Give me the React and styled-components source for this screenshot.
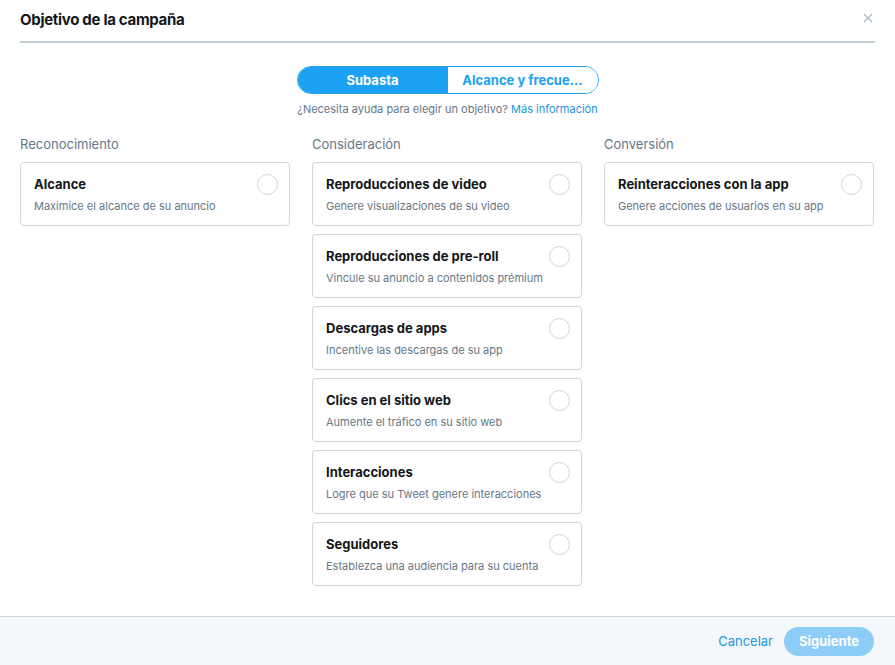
import styled, { createGlobalStyle } from 'styled-components'

const groups = [
  {
    title: 'Reconocimiento',
    items: [{ name: 'Alcance', desc: 'Maximice el alcance de su anuncio' }],
  },
  {
    title: 'Consideración',
    items: [
      { name: 'Reproducciones de video', desc: 'Genere visualizaciones de su video' },
      { name: 'Reproducciones de pre-roll', desc: 'Vincule su anuncio a contenidos prémium' },
      { name: 'Descargas de apps', desc: 'Incentive las descargas de su app' },
      { name: 'Clics en el sitio web', desc: 'Aumente el tráfico en su sitio web' },
      { name: 'Interacciones', desc: 'Logre que su Tweet genere interacciones' },
      { name: 'Seguidores', desc: 'Establezca una audiencia para su cuenta' },
    ],
  },
  {
    title: 'Conversión',
    items: [{ name: 'Reinteracciones con la app', desc: 'Genere acciones de usuarios en su app' }],
  },
]

export default function App() {
  return (
    <>
      <GlobalStyle />
      <Modal>
        <Header>
          <Title>Objetivo de la campaña</Title>
          <Close aria-label="Cerrar">
            <svg width="10" height="10" viewBox="0 0 10 10">
              <path d="M1 1L9 9M9 1L1 9" stroke="#aab8c2" strokeWidth="1.3" fill="none" />
            </svg>
          </Close>
        </Header>

        <Body>
          <Toggle>
            <ToggleButton $active>Subasta</ToggleButton>
            <ToggleButton>Alcance y frecue...</ToggleButton>
          </Toggle>
          <Help>
            ¿Necesita ayuda para elegir un objetivo? <Link href="#">Más información</Link>
          </Help>

          <Columns>
            {groups.map((g) => (
              <Column key={g.title}>
                <ColumnTitle>{g.title}</ColumnTitle>
                {g.items.map((it) => (
                  <Card key={it.name}>
                    <CardText>
                      <CardName>{it.name}</CardName>
                      <CardDesc>{it.desc}</CardDesc>
                    </CardText>
                    <Radio />
                  </Card>
                ))}
              </Column>
            ))}
          </Columns>
        </Body>

        <Footer>
          <CancelLink href="#">Cancelar</CancelLink>
          <PrimaryButton disabled>Siguiente</PrimaryButton>
        </Footer>
      </Modal>
    </>
  )
}

const GlobalStyle = createGlobalStyle`
  html, body {
    margin: 0;
    padding: 0;
    background: #fff;
  }
  body {
    font-family: Inter, Roboto, "Liberation Sans", Arial, sans-serif;
    color: #14171a;
    -webkit-font-smoothing: antialiased;
  }
`

const Modal = styled.div`
  width: 895px;
  height: 665px;
  display: flex;
  flex-direction: column;
  background: #fff;
`

const Header = styled.div`
  margin: 0 20px;
  display: flex;
  align-items: center;
  justify-content: space-between;
  border-bottom: 2px solid #c4cfd6;
  box-sizing: border-box;
  height: 43px;
`

const Title = styled.h1`
  margin: 0;
  font-size: 15px;
  font-weight: 700;
  letter-spacing: -0.3px;
  color: #14171a;
  padding-bottom: 2px;
`

const Close = styled.button`
  border: 0;
  background: none;
  padding: 0;
  margin-right: 2px;
  margin-bottom: 5px;
  display: flex;
  cursor: pointer;
`

const Body = styled.div`
  flex: 1;
  padding: 23px 20px 0;
  display: flex;
  flex-direction: column;
  align-items: center;
`

const Toggle = styled.div`
  display: flex;
  width: 302px;
  height: 28px;
  border: 1px solid #1da1f2;
  border-radius: 14px;
  overflow: hidden;
  box-sizing: border-box;
`

const ToggleButton = styled.button`
  flex: 1;
  border: 0;
  margin: 0;
  padding: 0;
  font-family: inherit;
  font-size: 13px;
  font-weight: 700;
  cursor: pointer;
  background: ${(p) => (p.$active ? '#1da1f2' : '#fff')};
  color: ${(p) => (p.$active ? '#fff' : '#1da1f2')};
`

const Help = styled.p`
  margin: 8px 0 0;
  font-size: 11px;
  color: #657786;
`

const Link = styled.a`
  color: #1b95e0;
  text-decoration: none;
`

const Columns = styled.div`
  align-self: stretch;
  margin-top: 20px;
  display: grid;
  grid-template-columns: repeat(3, 270px);
  column-gap: 22px;
  align-items: start;
`

const Column = styled.div`
  display: flex;
  flex-direction: column;
  gap: 8px;
`

const ColumnTitle = styled.div`
  font-size: 13px;
  color: #657786;
  margin-bottom: 2px;
  line-height: 16px;
`

const Card = styled.div`
  height: 64px;
  box-sizing: border-box;
  border: 1px solid #ccd6dd;
  border-radius: 4px;
  padding: 11px 11px 0 13px;
  display: flex;
  justify-content: space-between;
  align-items: flex-start;
`

const CardText = styled.div`
  display: flex;
  flex-direction: column;
  padding-top: 2px;
`

const CardName = styled.div`
  font-size: 13px;
  font-weight: 700;
  color: #14171a;
  line-height: 16px;
`

const CardDesc = styled.div`
  margin-top: 7px;
  font-size: 11px;
  color: #657786;
  line-height: 14px;
`

const Radio = styled.span`
  width: 19px;
  height: 19px;
  border: 1px solid #ccd6dd;
  border-radius: 50%;
  flex-shrink: 0;
`

const Footer = styled.div`
  height: 48px;
  border-top: 1px solid #ccd6dd;
  background: #f5f8fa;
  display: flex;
  align-items: center;
  justify-content: flex-end;
  gap: 11px;
  padding: 0 21px;
`

const CancelLink = styled.a`
  font-size: 13px;
  color: #1b95e0;
  text-decoration: none;
`

const PrimaryButton = styled.button`
  width: 90px;
  height: 29px;
  border: 0;
  border-radius: 15px;
  background: #8ecdf8;
  color: #fff;
  font-family: inherit;
  font-size: 13px;
  font-weight: 700;
`
